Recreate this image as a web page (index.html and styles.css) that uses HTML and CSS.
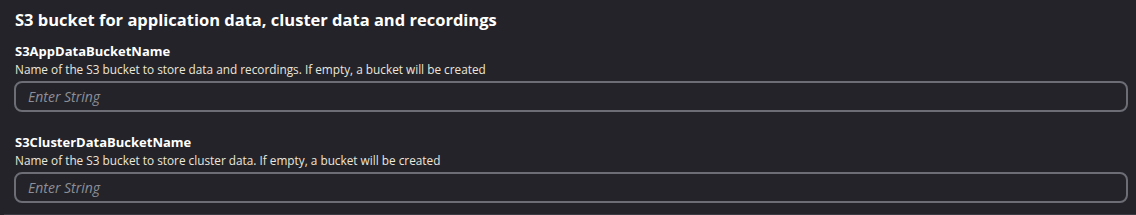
FILE: index.html
```html
<!DOCTYPE html>
<html lang="en">
<head>
  <meta charset="UTF-8"/>
  <title>S3 bucket parameters</title>
  <link rel="stylesheet" href="styles.css">
</head>
<body>
<section class="param-group">
  <h2>S3 bucket for application data, cluster data and recordings</h2>

  <div class="field">
    <label for="appBucket">S3AppDataBucketName</label>
    <p class="hint">Name of the S3 bucket to store data and recordings. If empty, a bucket will be created</p>
    <input type="text" id="appBucket" placeholder="Enter String" />
  </div>

  <div class="field">
    <label for="clusterBucket">S3ClusterDataBucketName</label>
    <p class="hint">Name of the S3 bucket to store cluster data. If empty, a bucket will be created</p>
    <input type="text" id="clusterBucket" placeholder="Enter String" />
  </div>
</section>
</body>
</html>
```

FILE: styles.css
```css
body {
  background-color: #232329;
  color: #fff;
  font-family: "Open Sans", sans-serif;
  margin: 0;
  padding: 0;
}

.param-group {
  padding: 9px 8px 11px 10px;
  margin-left: 4px;
  border-bottom: 1px solid #3a3b42;
}

.param-group h2 {
  font-size: 16.5px;
  line-height: 22px;
  font-weight: 700;
  margin: 0 0 11px 1px;
}

.field {
  display: flex;
  flex-direction: column;
  margin-bottom: 21px;
}

.field:last-child {
  margin-bottom: 0;
}

.field label {
  font-size: 13px;
  line-height: 18px;
  font-weight: 700;
  margin-left: 1px;
}

.hint {
  font-size: 11.8px;
  line-height: 16px;
  color: #ece6da;
  margin: 1px 0 4px 1px;
}

.field input {
  height: 31px;
  box-sizing: border-box;
  background: #232329;
  border: 2px solid #6c6d75;
  border-radius: 8px;
  padding: 0 12px;
  color: #fff;
  font-family: inherit;
  font-size: 14px;
}

.field input::placeholder {
  color: #8d8e96;
  font-style: italic;
}
```
